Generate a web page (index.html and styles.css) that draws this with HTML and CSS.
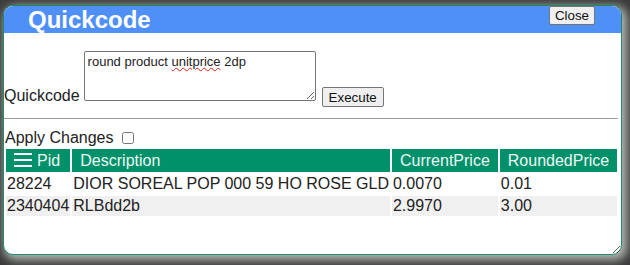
FILE: index.html
```html
<!DOCTYPE html>
<html lang="en">
<head>
    <meta charset="UTF-8">
    <title>Quickcode</title>
    <link rel="stylesheet" href="styles.css">
</head>
<body>
    <div class="dialog">
        <div class="dialog-header">
            <span class="dialog-title">Quickcode</span>
            <button class="close-btn">Close</button>
        </div>
        <div class="dialog-body">
            <div class="code-row">
                <label class="code-label">Quickcode</label>
                <div class="code-box" contenteditable="true">round product <span class="misspelt">unitprice</span> 2dp</div>
                <button class="exec-btn">Execute</button>
            </div>
            <hr class="divider">
            <div class="apply-row">
                <label>Apply Changes</label>
                <input type="checkbox" class="apply-check">
            </div>
            <table class="results">
                <thead>
                    <tr>
                        <th class="col-pid">
                            <span class="menu-icon">
                                <svg width="18" height="14" viewBox="0 0 18 14">
                                    <rect x="0" y="0" width="18" height="2" fill="#fff"/>
                                    <rect x="0" y="6" width="18" height="2" fill="#fff"/>
                                    <rect x="0" y="12" width="18" height="2" fill="#fff"/>
                                </svg>
                            </span>Pid
                        </th>
                        <th class="col-desc">Description</th>
                        <th class="col-cur">CurrentPrice</th>
                        <th class="col-round">RoundedPrice</th>
                    </tr>
                </thead>
                <tbody>
                    <tr>
                        <td>28224</td>
                        <td>DIOR SOREAL POP 000 59 HO ROSE GLD</td>
                        <td>0.0070</td>
                        <td>0.01</td>
                    </tr>
                    <tr class="alt">
                        <td>2340404</td>
                        <td>RLBdd2b</td>
                        <td>2.9970</td>
                        <td>3.00</td>
                    </tr>
                </tbody>
            </table>
        </div>
    </div>
</body>
</html>
```

FILE: styles.css
```css
body {
    margin: 0;
    padding: 5px 0 0 3px;
    height: 265px;
    box-sizing: border-box;
    overflow: hidden;
    background-color: #3b3b3b;
    font-family: Arial, "Liberation Sans", sans-serif;
    color: #222;
}

.dialog {
    width: 619px;
    height: 250px;
    box-sizing: border-box;
    background-color: #fff;
    border: 1px solid #1b8c6a;
    border-radius: 10px;
    box-shadow: 3px 3px 10px 2px rgba(200, 208, 200, 0.85);
    overflow: auto;
    resize: both;
}

.dialog-header {
    display: flex;
    align-items: flex-start;
    justify-content: space-between;
    height: 27px;
    background-color: #4e90f6;
    padding: 0 26px 0 24px;
}

.dialog-title {
    color: #fff;
    font-weight: bold;
    font-size: 24px;
    line-height: 28px;
}

.close-btn {
    font-family: Arial, "Liberation Sans", sans-serif;
    font-size: 13.333px;
    height: 19px;
    padding: 0 5px;
    margin: 0;
    color: #111;
    background-color: #efefef;
    border: 1px solid #767676;
    border-radius: 2px;
}

.code-row {
    display: flex;
    align-items: flex-end;
    padding-top: 18px;
    font-size: 16px;
}

.code-label {
    line-height: 18px;
    margin-bottom: -4px;
    margin-right: 4px;
}

.code-box {
    width: 232px;
    height: 50px;
    box-sizing: border-box;
    border: 1px solid #767676;
    border-radius: 2px;
    padding: 2px 3px;
    font-size: 13px;
    line-height: 15px;
    overflow: hidden;
    resize: both;
    outline: none;
}

.misspelt {
    text-decoration: underline wavy #e02020;
    text-decoration-thickness: 1px;
}

.exec-btn {
    font-family: Arial, "Liberation Sans", sans-serif;
    font-size: 13.333px;
    height: 20px;
    padding: 0 6px;
    margin: 0 0 -6px 6px;
    color: #111;
    background-color: #efefef;
    border: 1px solid #767676;
    border-radius: 2px;
}

.divider {
    margin: 17px 3px 0 0;
    border: none;
    border-top: 1px solid #9a9a9a;
    height: 0;
}

.apply-row {
    display: flex;
    align-items: center;
    font-size: 16px;
    padding-top: 10px;
    line-height: 18px;
}

.apply-row label {
    padding-left: 1px;
}

.apply-check {
    width: 12px;
    height: 12px;
    margin: 0 0 0 8px;
}

.results {
    border-spacing: 2px;
    font-size: 16px;
    margin-top: 0;
}

.results th {
    background-color: #00906a;
    color: #eef8f3;
    font-weight: normal;
    text-align: left;
    height: 23px;
    padding: 0 8px;
    white-space: nowrap;
}

.results td {
    padding: 0 1px;
    height: 20px;
    white-space: nowrap;
}

.results tr.alt td {
    background-color: #f0f0f0;
}

.col-pid { width: 48px; }
.col-desc { width: 301px; }
.col-cur { width: 89px; }
.col-round { width: 100px; }

.menu-icon {
    display: inline-block;
    vertical-align: -1px;
    margin-right: 5px;
}

.menu-icon svg {
    display: block;
}
```
